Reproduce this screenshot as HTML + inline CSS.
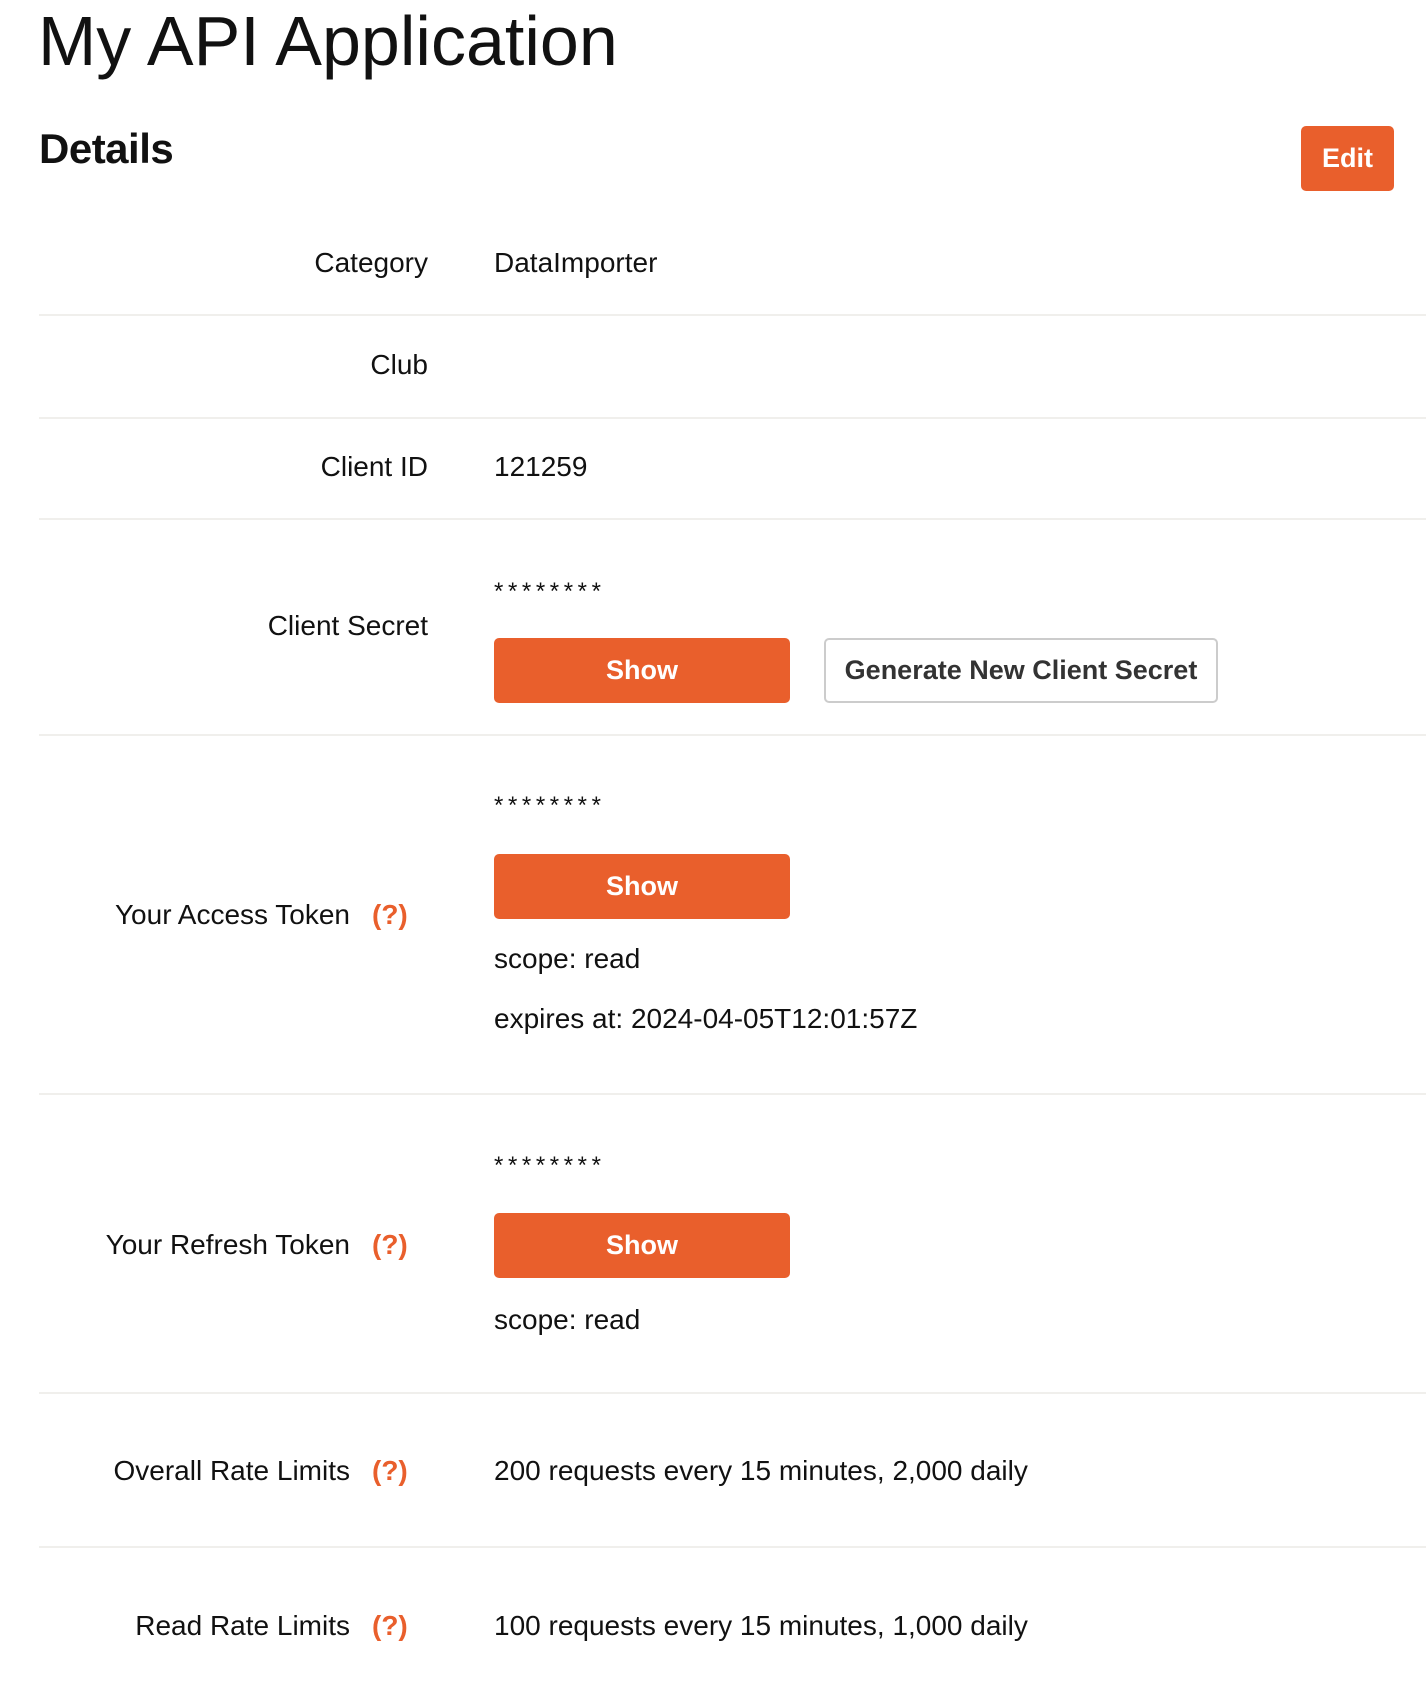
<!DOCTYPE html>
<html><head><style>
body{margin:0;width:1426px;height:1692px;background:#fff;font-family:"Liberation Sans",sans-serif;color:#111;position:relative;overflow:hidden}
.a{position:absolute;white-space:nowrap;line-height:40px;height:40px;font-size:28px}
.l{right:998px;text-align:right}
.v{left:494px}
.hr{position:absolute;left:39px;right:0;height:2px;background:#f0efec}
.btn{position:absolute;background:#e95f2c;color:#fff;font-weight:bold;font-size:27px;border-radius:5px;text-align:center;width:296px;height:65px;line-height:65px;left:494px}
.q{position:absolute;left:372px;color:#e95f2c;font-weight:bold;font-size:28px;line-height:40px;height:40px}
.st{letter-spacing:4.6px;font-size:24px}
</style></head><body>
<div style="position:absolute;left:38px;top:-4px;font-size:70px;line-height:90px">My API Application</div>
<div style="position:absolute;left:39px;top:125px;font-size:42px;font-weight:bold;line-height:48px;letter-spacing:-0.5px">Details</div>
<div style="position:absolute;left:1301px;top:126px;width:93px;height:65px;line-height:65px;background:#e95f2c;color:#fff;font-weight:bold;font-size:27px;border-radius:5px;text-align:center">Edit</div>

<div class="a l" style="top:243px">Category</div><div class="a v" style="top:243px">DataImporter</div>
<div class="hr" style="top:314px"></div>
<div class="a l" style="top:345px">Club</div>
<div class="hr" style="top:417px"></div>
<div class="a l" style="top:447px">Client ID</div><div class="a v" style="top:447px">121259</div>
<div class="hr" style="top:518px"></div>
<div class="a v st" style="top:572px">********</div>
<div class="a l" style="top:606px">Client Secret</div>
<div class="btn" style="top:638px">Show</div>
<div style="position:absolute;left:824px;top:638px;width:390px;height:61px;line-height:61px;border:2px solid #ccc;border-radius:5px;text-align:center;font-weight:bold;font-size:27px;color:#333">Generate New Client Secret</div>
<div class="hr" style="top:734px"></div>

<div class="a v st" style="top:786px">********</div>
<div class="a" style="right:1076px;top:895px">Your Access Token</div><div class="q" style="top:895px">(?)</div>
<div class="btn" style="top:854px">Show</div>
<div class="a v" style="top:939px">scope: read</div>
<div class="a v" style="top:999px">expires at: 2024-04-05T12:01:57Z</div>
<div class="hr" style="top:1093px"></div>

<div class="a v st" style="top:1146px">********</div>
<div class="a" style="right:1076px;top:1225px">Your Refresh Token</div><div class="q" style="top:1225px">(?)</div>
<div class="btn" style="top:1213px">Show</div>
<div class="a v" style="top:1300px">scope: read</div>
<div class="hr" style="top:1392px"></div>

<div class="a" style="right:1076px;top:1451px">Overall Rate Limits</div><div class="q" style="top:1451px">(?)</div>
<div class="a v" style="top:1451px">200 requests every 15 minutes, 2,000 daily</div>
<div class="hr" style="top:1546px"></div>
<div class="a" style="right:1076px;top:1606px">Read Rate Limits</div><div class="q" style="top:1606px">(?)</div>
<div class="a v" style="top:1606px">100 requests every 15 minutes, 1,000 daily</div>
</body></html>
